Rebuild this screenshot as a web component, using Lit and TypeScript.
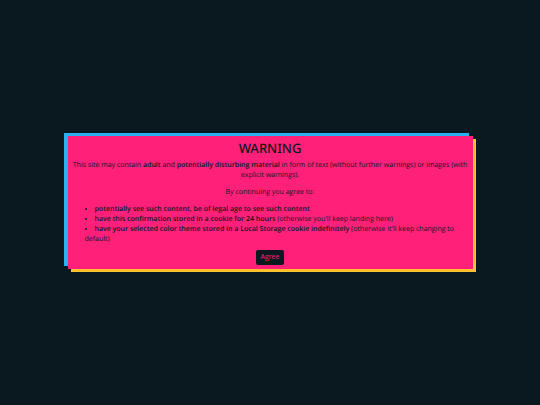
import { LitElement, html, css } from "lit";
import { customElement } from "lit/decorators.js";

@customElement("app-root")
export class AppRoot extends LitElement {
  static styles = css`
    :host {
      display: flex;
      align-items: center;
      justify-content: center;
      min-height: 100vh;
      background: #0a1820;
      color: #0a1820;
      font: 7px/10px "Open Sans", "Noto Sans", sans-serif;
      text-rendering: geometricPrecision;
    }
    .dialog {
      box-sizing: border-box;
      width: 75%;
      padding: 4px 3px;
      background: #ff2079;
      box-shadow: -4px -3px 0 #28b0f0, 3px 3px 0 #fdc22d;
      text-align: center;
    }
    b {
      font-weight: 600;
    }
    .title {
      margin: 0;
      font: 500 13px/16px "Noto Sans", sans-serif;
    }
    .text {
      margin: 5px 0 7px;
    }
    .terms {
      margin: 0;
      padding: 0 8px 0 14px;
      list-style: disc inside;
      text-align: left;
    }
    .agree {
      display: block;
      margin: 5px auto 0;
      padding: 2px 5px 3px;
      border: 0;
      border-radius: 2px;
      background: #0a1820;
      color: #ff2079;
      font: inherit;
    }
  `;

  render() {
    return html`
      <main class="dialog">
        <h1 class="title">WARNING</h1>
        <p class="text">
          This site may contain <b>adult</b> and
          <b>potentially disturbing material</b> in form of text (without
          further warnings) or images (with explicit warnings).
        </p>
        <p class="text">By continuing you agree to:</p>
        <ul class="terms">
          <li><b>potentially see such content, be of legal age to see such content</b></li>
          <li><b>have this confirmation stored in a cookie for 24 hours</b> (otherwise you'll keep landing here)</li>
          <li><b>have your selected color theme stored in a Local Storage cookie indefinitely</b> (otherwise it'll keep changing to default)</li>
        </ul>
        <button class="agree" type="button">Agree</button>
      </main>
    `;
  }
}
